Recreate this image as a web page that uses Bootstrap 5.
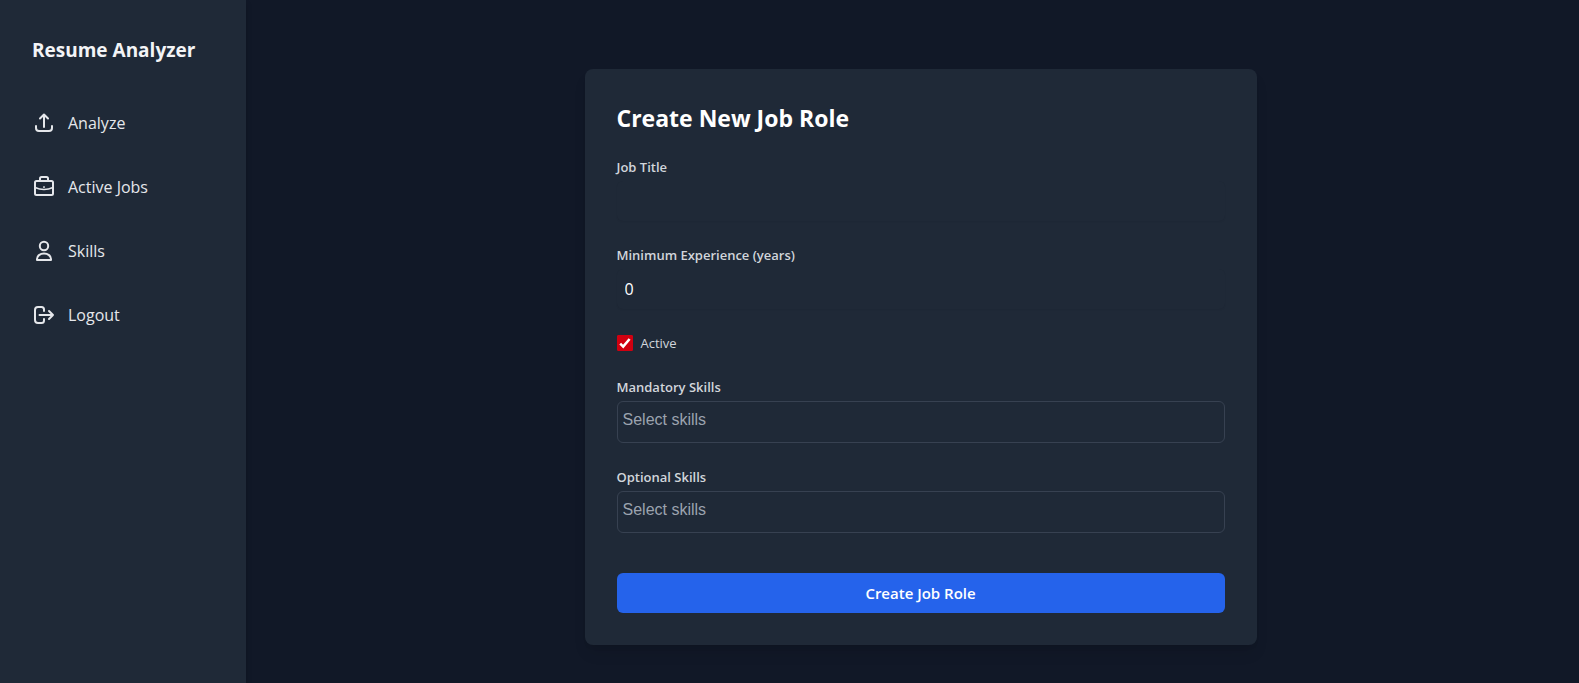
<!DOCTYPE html>
<html lang="en">
<head>
<meta charset="utf-8">
<meta name="viewport" content="width=device-width, initial-scale=1">
<title>Resume Analyzer</title>
<link href="https://cdn.jsdelivr.net/npm/bootstrap@5.3.0/dist/css/bootstrap.min.css" rel="stylesheet">
<style>
  body { background: #111827; color: #e5e7eb; font-family: "Open Sans", "Noto Sans", sans-serif; font-size: 16px; line-height: 24px; }
  .sidebar { width: 246px; background: #1f2937; padding: 36px 32px; box-shadow: 0 4px 6px rgba(0,0,0,.2); }
  .brand { font-size: 19px; line-height: 28px; color: #f3f4f6; margin-bottom: 35px; }
  .side-link { color: #e5e7eb; height: 48px; gap: 12px; }
  .side-link svg { width: 24px; height: 24px; fill: none; stroke: currentColor; stroke-width: 2; stroke-linejoin: round; stroke-linecap: round; }
  .page-main { padding: 69px 16px 32px 32px; }
  .role-card { max-width: 672px; background: #1f2937; padding: 32px; border-radius: 8px; box-shadow: 0 10px 15px -3px rgba(0,0,0,.1), 0 4px 6px -4px rgba(0,0,0,.1); }
  .role-card h1 { font-size: 23px; line-height: 34px; color: #fff; margin-bottom: 22px; }
  .role-form { gap: 24px; }
  .field-label { display: block; font-size: 13px; line-height: 20px; font-weight: 600; color: #d1d5db; margin-bottom: 4px; }
  .field-input { display: block; width: 100%; height: 40px; padding: 0 8px; border: 0; border-radius: 6px; background: #1f2937; color: #fff; box-shadow: 0 1px 2px rgba(0,0,0,.05); }
  .field-input::-webkit-inner-spin-button { display: none; }
  .tick { width: 16px; height: 16px; margin: 0; appearance: none; border-radius: 1px; border: 1px solid #d00010; }
  .tick:checked { background: #d00010 url("data:image/svg+xml,%3Csvg xmlns='http://www.w3.org/2000/svg' viewBox='0 0 16 16'%3E%3Cpath d='M3.2 8.6l3 3L12.6 4' fill='none' stroke='white' stroke-width='2.5'/%3E%3C/svg%3E") center / 16px 16px no-repeat; }
  .tick-label { font-size: 13px; line-height: 20px; color: #d1d5db; }
  .skill-input { display: block; width: 100%; height: 42px; padding: 0 5px 4px; border: 1px solid #374151; border-radius: 6px; background: transparent; color: #fff; font-family: "Liberation Sans", Arial, sans-serif; font-size: 16px; }
  .skill-input::placeholder { color: #9ca3af; opacity: 1; }
  .submit-btn { height: 40px; margin-top: 16px; padding: 0; border: 0; border-radius: 6px; background: #2563eb; font-size: 15px; font-weight: 600; }
</style>
</head>
<body>
<div class="d-flex min-vh-100">
  <aside class="sidebar flex-shrink-0">
    <div class="brand fw-bold text-nowrap">Resume Analyzer</div>
    <nav class="d-flex flex-column gap-3">
      <a class="side-link d-flex align-items-center text-decoration-none" href="#analyze">
        <svg viewBox="0 0 24 24" aria-hidden="true"><path d="M12 16V4M8 7.500L12 3.500l4 4M4 15v2q0 3 3 3h10q3 0 3-3v-2"/></svg>
        Analyze
      </a>
      <a class="side-link d-flex align-items-center text-decoration-none" href="#jobs">
        <svg viewBox="0 0 24 24" aria-hidden="true"><rect x="3" y="6" width="18" height="14" rx="1.500"/><path d="M8 6V3.500Q8 2 9.500 2h5Q16 2 16 3.500V6"/><path d="M3 12.500Q12 16.500 21 12.500" stroke-width="1.700"/><path d="M11.800 12h.4" stroke-width="1.700"/></svg>
        Active Jobs
      </a>
      <a class="side-link d-flex align-items-center text-decoration-none" href="#skills">
        <svg viewBox="0 0 24 24" aria-hidden="true"><circle cx="12" cy="7" r="4.200"/><path d="M5 21v-1c0-3 3-5.500 7-5.500s7 2.500 7 5.500v1z"/></svg>
        Skills
      </a>
      <a class="side-link d-flex align-items-center text-decoration-none" href="#logout">
        <svg viewBox="0 0 24 24" aria-hidden="true"><path d="M12 8V6.500q0-2.500-2.500-2.500H6Q3 4 3 7v10q0 3 3 3h3.500q2.500 0 2.500-2.500V16M7.500 12H21M17 8l4 4-4 4"/></svg>
        Logout
      </a>
    </nav>
  </aside>
  <main class="page-main flex-grow-1">
    <section class="role-card mx-auto">
      <h1 class="fw-bold">Create New Job Role</h1>
      <form class="role-form d-flex flex-column">
        <div>
          <label class="field-label" for="title">Job Title</label>
          <input class="field-input" id="title" type="text">
        </div>
        <div>
          <label class="field-label" for="years">Minimum Experience (years)</label>
          <input class="field-input" id="years" type="number" value="0">
        </div>
        <div class="d-flex align-items-center gap-2">
          <input class="tick" id="active" type="checkbox" checked>
          <label class="tick-label" for="active">Active</label>
        </div>
        <div>
          <label class="field-label" for="mandatory">Mandatory Skills</label>
          <input class="skill-input" id="mandatory" type="text" placeholder="Select skills">
        </div>
        <div>
          <label class="field-label" for="optional">Optional Skills</label>
          <input class="skill-input" id="optional" type="text" placeholder="Select skills">
        </div>
        <button class="submit-btn btn btn-primary w-100" type="submit">Create Job Role</button>
      </form>
    </section>
  </main>
</div>
<script src="https://cdn.jsdelivr.net/npm/bootstrap@5.3.0/dist/js/bootstrap.bundle.min.js"></script>
</body>
</html>
